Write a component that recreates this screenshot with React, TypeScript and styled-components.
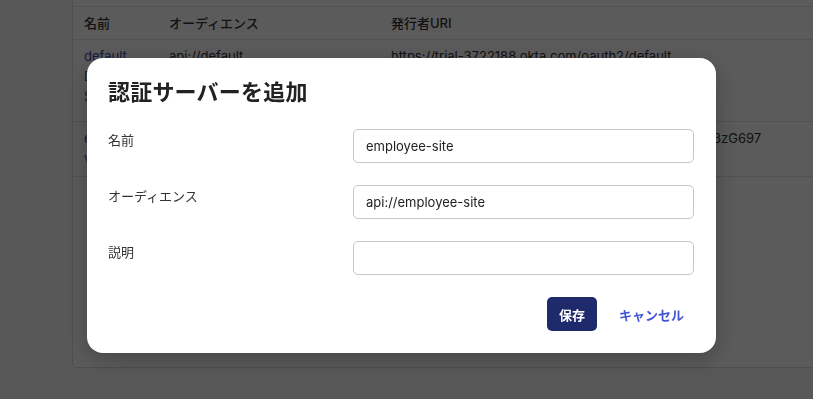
import styled, { createGlobalStyle } from 'styled-components'

const GlobalStyle = createGlobalStyle`
  html, body {
    margin: 0;
    padding: 0;
    height: 100%;
    overflow: hidden;
  }
  body {
    background: #f6f6f6;
    font-family: Inter, "Noto Sans CJK JP", sans-serif;
    color: #333;
  }
  * {
    box-sizing: border-box;
  }
`

// page underneath the dialog
const Page = styled.div`
  padding-left: 72px;
  width: 100%;
`

const Card = styled.div`
  width: 800px;
  margin-top: -40px;
  height: 408px;
  background: #fff;
  border: 1px solid #dcdcdc;
  border-radius: 4px;
`

const CardTop = styled.div`
  height: 46px;
  border-bottom: 1px solid #e3e3e3;
`

const Table = styled.div`
  display: flex;
  flex-direction: column;
`

const Row = styled.div<{ $h: number }>`
  display: grid;
  grid-template-columns: 85px 222px 1fr;
  height: ${(p) => p.$h}px;
  padding: 0 11px;
  border-bottom: 1px solid #e3e3e3;
  font-size: 13px;
  line-height: 20px;
  white-space: nowrap;
`

const HeadCell = styled.div`
  align-self: center;
  font-weight: 500;
  color: #333;
`

const Cell = styled.div`
  padding-top: 6px;
  color: #333;
`

const LinkText = styled.div`
  color: #3b47b0;
`

const Muted = styled.div`
  color: #555;
`

// dialog
const Overlay = styled.div`
  position: fixed;
  inset: 0;
  background: rgba(0, 0, 0, 0.643);
  display: flex;
  align-items: flex-start;
  padding: 58px 0 0 87px;
`

const Dialog = styled.div`
  width: 629px;
  background: #fff;
  border-radius: 16px;
  padding: 19px 22px 22px 21px;
  box-shadow: 0 6px 24px rgba(0, 0, 0, 0.25);
`

const Title = styled.h2`
  margin: 0 0 22px;
  font-size: 22px;
  line-height: 30px;
  font-weight: 700;
  color: #222;
  letter-spacing: 0.2px;
`

const Form = styled.div`
  display: flex;
  flex-direction: column;
  gap: 22px;
`

const Field = styled.div`
  display: grid;
  grid-template-columns: 245px 1fr;
  align-items: start;
`

const Label = styled.label`
  padding-top: 2px;
  font-size: 13px;
  line-height: 18px;
  color: #333;
`

const Input = styled.input`
  height: 34px;
  width: 100%;
  border: 1px solid #c6c6c6;
  border-radius: 5px;
  padding: 0 12px;
  font-family: Inter, "Noto Sans CJK JP", sans-serif;
  font-size: 13px;
  color: #222;
  background: #fff;
  outline: none;
`

const Actions = styled.div`
  display: flex;
  justify-content: flex-end;
  gap: 12px;
  margin-top: 22px;
`

const Button = styled.button<{ $primary?: boolean }>`
  height: 34px;
  padding: 0 ${(p) => (p.$primary ? 12 : 10)}px;
  border: none;
  border-radius: 5px;
  font-family: Inter, "Noto Sans CJK JP", sans-serif;
  font-size: 13px;
  font-weight: 700;
  cursor: pointer;
  background: ${(p) => (p.$primary ? '#1f2a6d' : 'transparent')};
  color: ${(p) => (p.$primary ? '#fff' : '#4355d3')};
`

export default function App() {
  return (
    <>
      <GlobalStyle />
      <Page>
        <Card>
          <CardTop />
          <Table>
            <Row $h={33}>
              <HeadCell>名前</HeadCell>
              <HeadCell>オーディエンス</HeadCell>
              <HeadCell>発行者URI</HeadCell>
            </Row>
            <Row $h={82}>
              <Cell>
                <LinkText>default</LinkText>
                <Muted>Default</Muted>
                <Muted>Server</Muted>
              </Cell>
              <Cell>api://default</Cell>
              <Cell>https://trial-3722188.okta.com/oauth2/default</Cell>
            </Row>
            <Row $h={55}>
              <Cell>
                <LinkText>employee-site</LinkText>
                <LinkText>view</LinkText>
              </Cell>
              <Cell>api://employee-site</Cell>
              <Cell>https://trial-3722188.okta.com/oauth2/aus9k2x7vb93zG697</Cell>
            </Row>
          </Table>
        </Card>
      </Page>
      <Overlay>
        <Dialog>
          <Title>認証サーバーを追加</Title>
          <Form>
            <Field>
              <Label>名前</Label>
              <Input defaultValue="employee-site" />
            </Field>
            <Field>
              <Label>オーディエンス</Label>
              <Input defaultValue="api://employee-site" />
            </Field>
            <Field>
              <Label>説明</Label>
              <Input defaultValue="" />
            </Field>
          </Form>
          <Actions>
            <Button $primary>保存</Button>
            <Button>キャンセル</Button>
          </Actions>
        </Dialog>
      </Overlay>
    </>
  )
}
